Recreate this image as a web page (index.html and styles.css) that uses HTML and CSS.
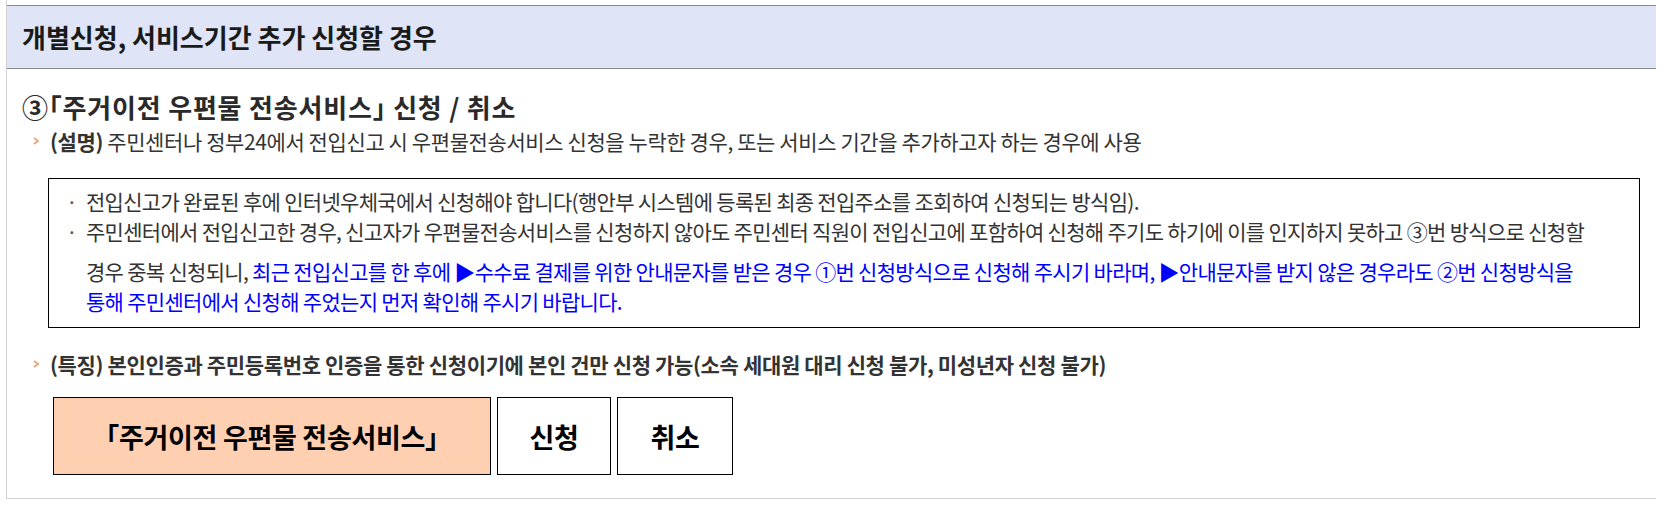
FILE: index.html
```html
<!DOCTYPE html>
<html>
<head>
    <title>주거이전 우편물 전송서비스</title>
    <link rel="stylesheet" href="styles.css">
</head>
<body>
    <div class="panel">
        <h2 class="head">개별신청, 서비스기간 추가 신청할 경우</h2>
        <h3 class="title">③「주거이전 우편물 전송서비스」 신청 / 취소</h3>
        <p class="row">
            <svg class="arr" width="6" height="8" viewBox="0 0 6 8"><polyline points="1,1 5,4 1,7" fill="none" stroke="#e6a97c" stroke-width="2"/></svg>
            <span><b>(설명)</b> 주민센터나 정부24에서 전입신고 시 우편물전송서비스 신청을 누락한 경우, 또는 서비스 기간을 추가하고자 하는 경우에 사용</span>
        </p>
        <div class="notice">
            <ul>
                <li>전입신고가 완료된 후에 인터넷우체국에서 신청해야 합니다(행안부 시스템에 등록된 최종 전입주소를 조회하여 신청되는 방식임).</li>
                <li>주민센터에서 전입신고한 경우, 신고자가 우편물전송서비스를 신청하지 않아도 주민센터 직원이 전입신고에 포함하여 신청해 주기도 하기에 이를 인지하지 못하고 ③번 방식으로 신청할 경우 중복 신청되니, <span class="blue">최근 전입신고를 한 후에 <i class="lift"></i>▶수수료 결제를 위한 안내문자를 받은 경우 ①번 신청방식으로 신청해 주시기 바라며, ▶안내문자를 받지 않은 경우라도 ②번 신청방식을 통해 주민센터에서 신청해 주었는지 먼저 확인해 주시기 바랍니다.</span></li>
            </ul>
        </div>
        <p class="row strong">
            <svg class="arr" width="6" height="8" viewBox="0 0 6 8"><polyline points="1,1 5,4 1,7" fill="none" stroke="#e6a97c" stroke-width="2"/></svg>
            <span>(특징) 본인인증과 주민등록번호 인증을 통한 신청이기에 본인 건만 신청 가능(소속 세대원 대리 신청 불가, 미성년자 신청 불가)</span>
        </p>
        <div class="btns">
            <a class="btn main">「주거이전 우편물 전송서비스」</a>
            <a class="btn">신청</a>
            <a class="btn">취소</a>
        </div>
    </div>
</body>
</html>
```

FILE: styles.css
```css
body { margin: 0; background: #fff; font-family: "Noto Sans CJK KR", "Noto Sans", sans-serif; color: #333; overflow: hidden; }
.panel { margin-left: 6px; width: 1649px; padding-top: 5px; padding-bottom: 23px; border-left: 1px solid #d2d2d2; border-bottom: 1px solid #d2d2d2; }
.head { margin: 0; height: 62px; line-height: 62px; padding-left: 15px; background: #dfe5f7; border-top: 1px solid #8a8a8a; border-bottom: 1px solid #8a8a8a; font-size: 26px; font-weight: bold; color: #1a1a1a; }
.title { margin: 21px 0 0; padding-left: 15px; font-size: 26px; line-height: 34px; font-weight: bold; color: #2a2a2a; letter-spacing: 0.8px; font-feature-settings: "halt"; }
.row { display: flex; align-items: center; margin: 3px 0 0; padding-left: 26px; font-size: 21px; line-height: 28px; letter-spacing: -0.4px; }
.row .arr { flex: none; margin-right: 11px; }
.row b { font-weight: bold; }
.row.strong { margin-top: 22px; font-weight: bold; letter-spacing: -0.35px; }
.notice { margin: 23px 16px 0 41px; padding: 7px 45px 11px 0; border: 1px solid #000; }
.notice ul { list-style: none; margin: 0; padding: 0; }
.notice li { padding-left: 37px; font-size: 21px; line-height: 30px; letter-spacing: -0.7px; word-break: keep-all; }
.notice li::before { content: "ㆍ"; display: inline-block; width: 24px; margin-left: -24px; color: #555; }
.blue { color: #0000ff; }
.lift { display: inline-block; width: 0; height: 1px; vertical-align: 33px; }
.btns { display: flex; gap: 6px; margin: 19px 0 0 46px; }
.btn { display: flex; align-items: center; justify-content: center; height: 76px; border: 1px solid #000; background: #fff; color: #000; font-size: 27px; font-weight: bold; letter-spacing: -0.3px; }
.btn.main { width: 436px; background: #ffcfb2; }
.btn:nth-child(2) { width: 112px; }
.btn:nth-child(3) { width: 114px; }
```
